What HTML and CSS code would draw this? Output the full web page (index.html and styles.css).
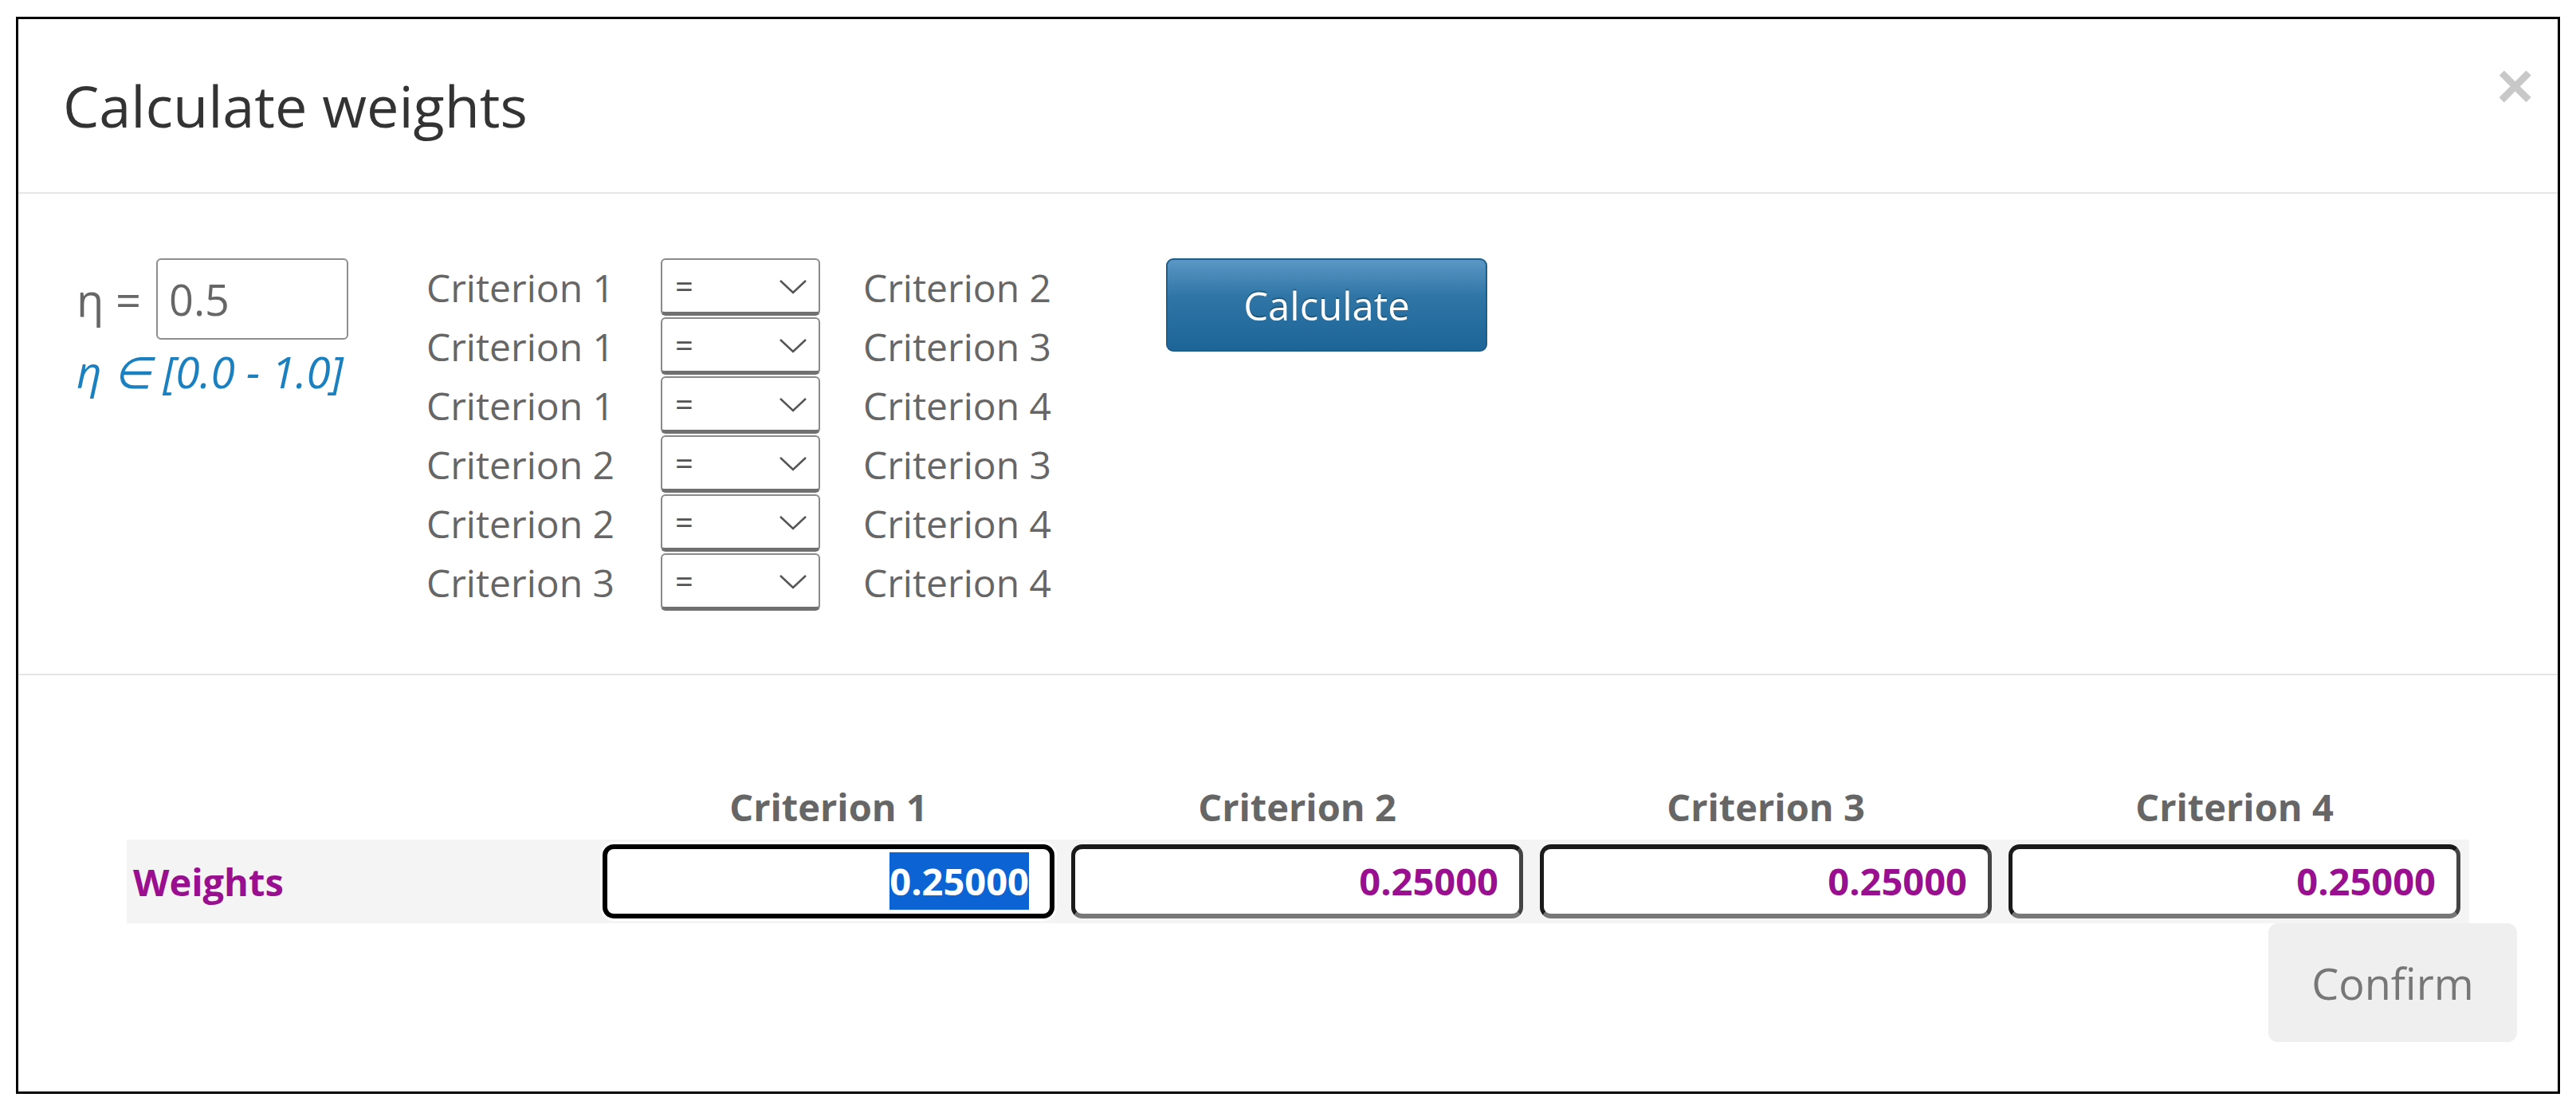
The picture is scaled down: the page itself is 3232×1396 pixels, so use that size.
FILE: index.html
```html
<!DOCTYPE html>
<html lang="en">
<head>
<meta charset="utf-8">
<title>Calculate weights</title>
<link rel="stylesheet" href="styles.css">
</head>
<body>
<div class="modal">
  <div class="modal-header">
    <h4 class="modal-title">Calculate weights</h4>
    <button class="close" type="button">×</button>
  </div>
  <div class="params">
    <div class="eta-col">
      <div class="eta-row">
        <span class="eta-label">η =</span>
        <input class="eta-input" type="text" value="0.5">
      </div>
      <div class="eta-hint">η ∈ [0.0 - 1.0]</div>
    </div>
    <div class="pairs">
      <span class="pair-a">Criterion 1</span>
      <div class="sel-wrap"><select class="rel"><option>=</option></select><svg class="chev" viewBox="0 0 36 20"><path d="M2 2 L18 17 L34 2" fill="none" stroke="#555" stroke-width="2.5"/></svg></div>
      <span class="pair-b">Criterion 2</span>

      <span class="pair-a">Criterion 1</span>
      <div class="sel-wrap"><select class="rel"><option>=</option></select><svg class="chev" viewBox="0 0 36 20"><path d="M2 2 L18 17 L34 2" fill="none" stroke="#555" stroke-width="2.5"/></svg></div>
      <span class="pair-b">Criterion 3</span>

      <span class="pair-a">Criterion 1</span>
      <div class="sel-wrap"><select class="rel"><option>=</option></select><svg class="chev" viewBox="0 0 36 20"><path d="M2 2 L18 17 L34 2" fill="none" stroke="#555" stroke-width="2.5"/></svg></div>
      <span class="pair-b">Criterion 4</span>

      <span class="pair-a">Criterion 2</span>
      <div class="sel-wrap"><select class="rel"><option>=</option></select><svg class="chev" viewBox="0 0 36 20"><path d="M2 2 L18 17 L34 2" fill="none" stroke="#555" stroke-width="2.5"/></svg></div>
      <span class="pair-b">Criterion 3</span>

      <span class="pair-a">Criterion 2</span>
      <div class="sel-wrap"><select class="rel"><option>=</option></select><svg class="chev" viewBox="0 0 36 20"><path d="M2 2 L18 17 L34 2" fill="none" stroke="#555" stroke-width="2.5"/></svg></div>
      <span class="pair-b">Criterion 4</span>

      <span class="pair-a">Criterion 3</span>
      <div class="sel-wrap"><select class="rel"><option>=</option></select><svg class="chev" viewBox="0 0 36 20"><path d="M2 2 L18 17 L34 2" fill="none" stroke="#555" stroke-width="2.5"/></svg></div>
      <span class="pair-b">Criterion 4</span>
    </div>
    <button class="btn-calc" type="button">Calculate</button>
  </div>
  <div class="results">
    <div class="wgrid whead">
      <span></span>
      <span>Criterion 1</span>
      <span>Criterion 2</span>
      <span>Criterion 3</span>
      <span>Criterion 4</span>
    </div>
    <div class="wgrid wrow">
      <span class="wlabel">Weights</span>
      <div class="wbox focused"><span class="sel">0.25000</span></div>
      <div class="wbox">0.25000</div>
      <div class="wbox">0.25000</div>
      <div class="wbox">0.25000</div>
    </div>
    <div class="footer">
      <button class="btn-confirm" type="button">Confirm</button>
    </div>
  </div>
</div>
</body>
</html>
```

FILE: styles.css
```css
* { box-sizing: border-box; }

body {
  margin: 0;
  background: #fff;
  font-family: "Open Sans", "Liberation Sans", sans-serif;
}

.modal {
  margin: 21px 0 0 20px;
  width: 3192px;
  border: 3px solid #000;
  background: #fff;
}

.modal-header {
  display: flex;
  justify-content: space-between;
  align-items: center;
  height: 219px;
  padding: 0 30px 0 56px;
  border-bottom: 2px solid #e5e5e5;
}

.modal-title {
  margin: 0;
  font-size: 72px;
  font-weight: 400;
  line-height: 1.1;
  color: #333;
}

.close {
  align-self: flex-start;
  margin-top: 44px;
  padding: 0;
  border: 0;
  background: transparent;
  font-family: "Liberation Sans", sans-serif;
  font-size: 80px;
  font-weight: 700;
  line-height: 1;
  color: #c8c8c8;
}

.params {
  display: flex;
  align-items: flex-start;
  padding: 81px 0 77px 73px;
  border-bottom: 2px solid #e5e5e5;
}

.eta-col {
  width: 439px;
}

.eta-row {
  display: flex;
  align-items: center;
}

.eta-label {
  width: 100px;
  font-size: 56px;
  color: #666;
}

.eta-input {
  width: 241px;
  height: 102px;
  padding: 0 14px;
  border: 2px solid #8e8e8e;
  border-radius: 6px;
  font-family: "Open Sans", sans-serif;
  font-size: 54px;
  color: #666;
  outline: none;
}

.eta-hint {
  margin-top: 2px;
  font-size: 55px;
  font-style: italic;
  line-height: 76px;
  color: #1a80c0;
}

.pairs {
  display: grid;
  grid-template-columns: 294px 200px 434px;
  grid-auto-rows: 74px;
}

.pair-a,
.pair-b {
  font-size: 48px;
  line-height: 74px;
  color: #666;
}

.pair-b {
  padding-left: 54px;
}

.sel-wrap {
  position: relative;
  width: 200px;
  height: 72px;
}

.rel {
  appearance: none;
  -webkit-appearance: none;
  width: 200px;
  height: 72px;
  padding: 0 0 0 16px;
  border: 2px solid #8a8a8a;
  border-bottom: 5px solid #707070;
  border-radius: 6px;
  background: #fff;
  font-family: "Open Sans", sans-serif;
  font-size: 40px;
  color: #555;
}

.chev {
  position: absolute;
  right: 16px;
  top: 26px;
  width: 36px;
  height: 20px;
  pointer-events: none;
}

.btn-calc {
  width: 403px;
  height: 117px;
  border: 2px solid #1d5d8a;
  border-radius: 9px;
  background: linear-gradient(to bottom, #5b97c4 0%, #2f76a7 40%, #1d6596 100%);
  font-family: "Open Sans", sans-serif;
  font-size: 49px;
  color: #fff;
  text-shadow: 0 -2px 0 rgba(0, 0, 0, 0.25);
}

.results {
  padding: 130px 51px 62px 136px;
}

.wgrid {
  display: grid;
  grid-template-columns: 576px repeat(4, 567px);
  column-gap: 21px;
  width: 2939px;
}

.whead {
  height: 70px;
  margin-bottom: 6px;
  align-items: center;
}

.whead span {
  text-align: center;
  font-size: 47px;
  font-weight: 700;
  color: #666;
}

.wrow {
  height: 105px;
  padding: 6px 11px 6px 0;
  background: #f4f4f4;
  align-items: center;
}

.wlabel {
  padding-left: 8px;
  font-size: 47px;
  font-weight: 700;
  color: #990f8f;
}

.wbox {
  height: 93px;
  padding-right: 26px;
  border-style: solid;
  border-width: 6px 5px 6px 5px;
  border-color: #1a1a1a #444 #777 #1a1a1a;
  border-radius: 14px;
  background: #fff;
  text-align: right;
  font-size: 47px;
  font-weight: 700;
  line-height: 81px;
  color: #990f8f;
}

.wbox.focused {
  border: 6px solid #000;
  box-shadow: 0 0 0 3px #fff;
  line-height: 81px;
}

.wbox .sel {
  background: #0c64d4;
  color: #fff;
  padding: 4px 0;
}

.footer {
  display: flex;
  justify-content: flex-end;
}

.btn-confirm {
  width: 312px;
  height: 149px;
  border: 0;
  border-radius: 12px;
  background: #efefef;
  font-family: "Open Sans", sans-serif;
  font-size: 54px;
  color: #777;
}
```
